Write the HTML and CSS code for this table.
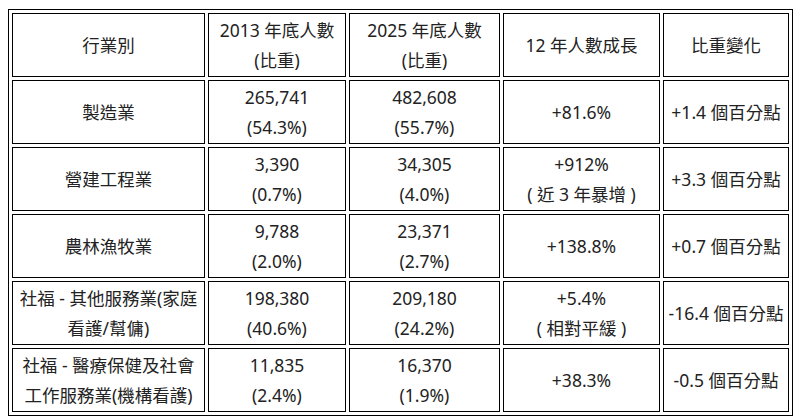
FILE: index.html
```html
<!DOCTYPE html>
<html lang="zh-Hant">
<head>
<meta charset="utf-8">
<title>行業別人數</title>
<link rel="stylesheet" href="styles.css">
</head>
<body>
<table class="data">
  <colgroup>
    <col class="c1"><col class="c2"><col class="c3"><col class="c4"><col class="c5">
  </colgroup>
  <tr>
    <td>行業別</td>
    <td>2013 年底人數<br>(比重)</td>
    <td>2025 年底人數<br>(比重)</td>
    <td>12 年人數成長</td>
    <td>比重變化</td>
  </tr>
  <tr>
    <td>製造業</td>
    <td>265,741<br>(54.3%)</td>
    <td>482,608<br>(55.7%)</td>
    <td>+81.6%</td>
    <td>+1.4 個百分點</td>
  </tr>
  <tr>
    <td>營建工程業</td>
    <td>3,390<br>(0.7%)</td>
    <td>34,305<br>(4.0%)</td>
    <td>+912%<br>( 近 3 年暴增 )</td>
    <td>+3.3 個百分點</td>
  </tr>
  <tr>
    <td>農林漁牧業</td>
    <td>9,788<br>(2.0%)</td>
    <td>23,371<br>(2.7%)</td>
    <td>+138.8%</td>
    <td>+0.7 個百分點</td>
  </tr>
  <tr>
    <td>社福 - 其他服務業(家庭<br>看護/幫傭)</td>
    <td>198,380<br>(40.6%)</td>
    <td>209,180<br>(24.2%)</td>
    <td>+5.4%<br>( 相對平緩 )</td>
    <td>-16.4 個百分點</td>
  </tr>
  <tr>
    <td>社福 - 醫療保健及社會<br>工作服務業(機構看護)</td>
    <td>11,835<br>(2.4%)</td>
    <td>16,370<br>(1.9%)</td>
    <td>+38.3%</td>
    <td>-0.5 個百分點</td>
  </tr>
</table>
</body>
</html>
```

FILE: styles.css
```css
html, body {
  margin: 0;
  padding: 0;
  background: #ffffff;
}

body {
  padding: 9px 0 0 8px;
  font-family: "Noto Sans", "Noto Sans CJK TC", sans-serif;
  font-size: 17.5px;
  color: #222222;
}

.data {
  table-layout: fixed;
  width: 785px;
  border: 1px solid #000000;
  border-collapse: separate;
  border-spacing: 3px;
}

.data td {
  box-sizing: border-box;
  border: 1px solid #000000;
  padding: 1px 0;
  height: 64px;
  line-height: 30px;
  text-align: center;
  vertical-align: middle;
  white-space: nowrap;
}

.c1 { width: 193px; }
.c2 { width: 138px; }
.c3 { width: 151px; }
.c4 { width: 157px; }
.c5 { width: 126px; }
```
